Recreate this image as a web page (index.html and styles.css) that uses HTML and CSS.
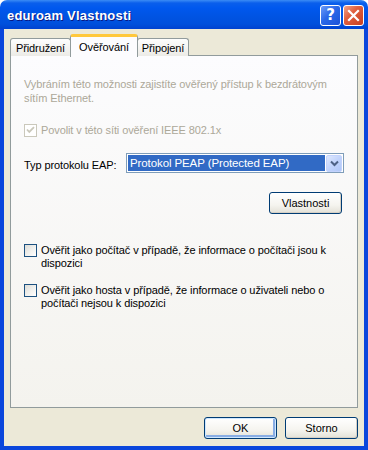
FILE: index.html
```html
<!DOCTYPE html>
<html lang="cs">
<head>
  <meta charset="UTF-8" />
  <title>eduroam Vlastnosti</title>
  <link rel="stylesheet" href="styles.css">
</head>
<body>

  <div class="window">
    <div class="titlebar">
      <span class="title">eduroam Vlastnosti</span>
      <div class="caption-buttons">
        <span class="cap-btn help">?</span>
        <span class="cap-btn close">
          <svg width="13" height="13" viewBox="0 0 13 13">
            <path d="M2 2 L11 11 M11 2 L2 11" stroke="#fff" stroke-width="2.2" stroke-linecap="square"/>
          </svg>
        </span>
      </div>
    </div>

    <div class="frame">
      <!-- zalozky -->
      <div class="tabs">
        <div class="tab tab-1">Přidružení</div>
        <div class="tab tab-active">Ověřování</div>
        <div class="tab tab-3">Připojení</div>
      </div>

      <div class="panel">
        <p class="desc disabled">Vybráním této možnosti zajistíte ověřený přístup k bezdrátovým sítím Ethernet.</p>

        <label class="check-row disabled enable-row">
          <span class="box box-disabled">
            <svg width="11" height="11" viewBox="0 0 11 11">
              <path d="M2 4.5 L4.3 7 L9 2.2" fill="none" stroke="#c9c7ba" stroke-width="1.8"/>
            </svg>
          </span>
          <span class="check-label">Povolit v této síti ověření IEEE 802.1x</span>
        </label>

        <div class="eap-row">
          <span class="eap-label">Typ protokolu EAP:</span>
          <div class="combo">
            <span class="combo-value">Protokol PEAP (Protected EAP)</span>
            <span class="combo-btn">
              <svg width="9" height="7" viewBox="0 0 9 7">
                <path d="M1 1.5 L4.5 5 L8 1.5" fill="none" stroke="#4d6185" stroke-width="2"/>
              </svg>
            </span>
          </div>
        </div>

        <div class="props-row">
          <button class="btn btn-props">Vlastnosti</button>
        </div>

        <label class="check-row first-opt">
          <span class="box"></span>
          <span class="check-label">Ověřit jako počítač v případě, že informace o počítači jsou k dispozici</span>
        </label>

        <label class="check-row second-opt">
          <span class="box"></span>
          <span class="check-label">Ověřit jako hosta v případě, že informace o uživateli nebo o počítači nejsou k dispozici</span>
        </label>
      </div>

      <div class="footer">
        <button class="btn btn-default">OK</button>
        <button class="btn">Storno</button>
      </div>
    </div>
  </div>

</body>
</html>
```

FILE: styles.css
```css
/* ZAKLAD */
* {
  box-sizing: border-box;
  margin: 0;
  padding: 0;
}

body {
  font-family: "Liberation Sans", Arial, sans-serif;
  font-size: 11px;
  letter-spacing: -0.1px;
  color: #000;
  background: #fff;
}

/* OKNO */
.window {
  width: 368px;
  height: 450px;
  display: flex;
  flex-direction: column;
}

.titlebar {
  height: 29px;
  display: flex;
  align-items: center;
  justify-content: space-between;
  padding: 0 4px 0 7px;
  border-radius: 7px 7px 0 0;
  background: linear-gradient(#3b8cf5 0, #0a5fec 3px, #0058ee 8px, #0054e3 16px, #0050dc 24px, #0042d0 29px);
}

.title {
  color: #fff;
  font-family: "Liberation Sans", Arial, sans-serif;
  font-weight: bold;
  font-size: 13px;
  letter-spacing: 0.2px;
  text-shadow: 1px 1px 0 #0a1883;
  margin-top: 1px;
}

.caption-buttons {
  display: flex;
  gap: 2px;
  margin-top: 1px;
}

.cap-btn {
  width: 21px;
  height: 21px;
  border: 1px solid #fff;
  border-radius: 3px;
  display: flex;
  align-items: center;
  justify-content: center;
}

.help {
  background: linear-gradient(135deg, #6b9cf8 0, #2a68e8 45%, #1b52d8 100%);
  color: #fff;
  font-family: "DejaVu Sans", sans-serif;
  font-weight: bold;
  font-size: 15px;
}

.close {
  background: linear-gradient(135deg, #f0a48a 0, #e0603f 40%, #c9401f 100%);
}

.frame {
  flex: 1;
  display: flex;
  flex-direction: column;
  background: #ece9d8;
  border-style: solid;
  border-color: #0a46dc;
  border-width: 0 4px 4px 4px;
  padding: 5px 6px 7px 6px;
}

/* ZALOZKY */
.tabs {
  display: flex;
  align-items: flex-end;
  height: 22px;
  position: relative;
  z-index: 1;
  margin-bottom: -1px;
}

.tab {
  height: 18px;
  border: 1px solid #919b9c;
  border-bottom: none;
  border-radius: 3px 3px 0 0;
  background: linear-gradient(#fefefe, #ecebe6);
  display: flex;
  align-items: center;
  justify-content: center;
  padding-top: 1px;
}

.tab-1 {
  width: 61px;
  margin-right: -1px;
}

.tab-active {
  width: 68px;
  height: 23px;
  background: #fcfcfe;
  border-top: 3px solid #ffc83c;
  border-radius: 3px 3px 0 0;
  margin-right: -1px;
  padding-bottom: 2px;
  margin-bottom: -1px;
}

.tab-3 {
  width: 52px;
}

.panel {
  flex: 1;
  border: 1px solid #919b9c;
  background: linear-gradient(#fcfcfe, #f4f3ee);
  padding: 21px 13px 0 13px;
}

.disabled {
  color: #aca899;
}

.desc {
  line-height: 14px;
  padding-right: 10px;
}

/* ZASKRTAVACI POLE */
.check-row {
  display: flex;
  align-items: flex-start;
  gap: 4px;
  line-height: 13px;
}

.box {
  flex: none;
  width: 13px;
  height: 13px;
  border: 1px solid #1c5180;
  background: linear-gradient(135deg, #dcdcd7 0, #f3f3f0 60%, #fff 100%);
  display: flex;
  align-items: center;
  justify-content: center;
}

.box-disabled {
  border-color: #cac8bb;
  background: #fff;
}

.enable-row {
  margin-top: 19px;
}

.first-opt {
  margin-top: 30px;
  padding-right: 10px;
}

.second-opt {
  margin-top: 14px;
  padding-right: 10px;
}

/* EAP */
.eap-row {
  display: flex;
  align-items: center;
  margin-top: 16px;
}

.eap-label {
  flex: 1;
  padding-top: 4px;
}

.combo {
  width: 218px;
  height: 20px;
  border: 1px solid #7f9db9;
  background: #fff;
  display: flex;
  align-items: center;
  padding: 1px;
  gap: 1px;
}

.combo-value {
  flex: 1;
  height: 16px;
  background: #316ac5;
  color: #fff;
  font-size: 11.5px;
  line-height: 16px;
  padding-left: 2px;
}

.combo-btn {
  width: 16px;
  height: 17px;
  border-radius: 2px;
  background: linear-gradient(135deg, #dfe8fd 0, #c2d4fc 50%, #b0c7f8 100%);
  border: 1px solid #c3d3fd;
  display: flex;
  align-items: center;
  justify-content: center;
}

/* TLACITKA */
.props-row {
  display: flex;
  justify-content: flex-end;
  margin-top: 19px;
  padding-right: 2px;
}

.btn {
  width: 73px;
  height: 22px;
  font-family: "Liberation Sans", Arial, sans-serif;
  font-size: 11px;
  color: #000;
  border: 1px solid #003c74;
  border-radius: 3px;
  background: linear-gradient(#fff 0, #f5f4ef 60%, #e3e1d7 100%);
  box-shadow: inset -1px -1px 0 #d6d0c5;
}

.btn-default {
  box-shadow: inset 0 0 0 1px #cee7ff, inset -1px -1px 0 2px #89ade4;
}

.footer {
  display: flex;
  justify-content: flex-end;
  gap: 8px;
  margin-top: 9px;
}
```
